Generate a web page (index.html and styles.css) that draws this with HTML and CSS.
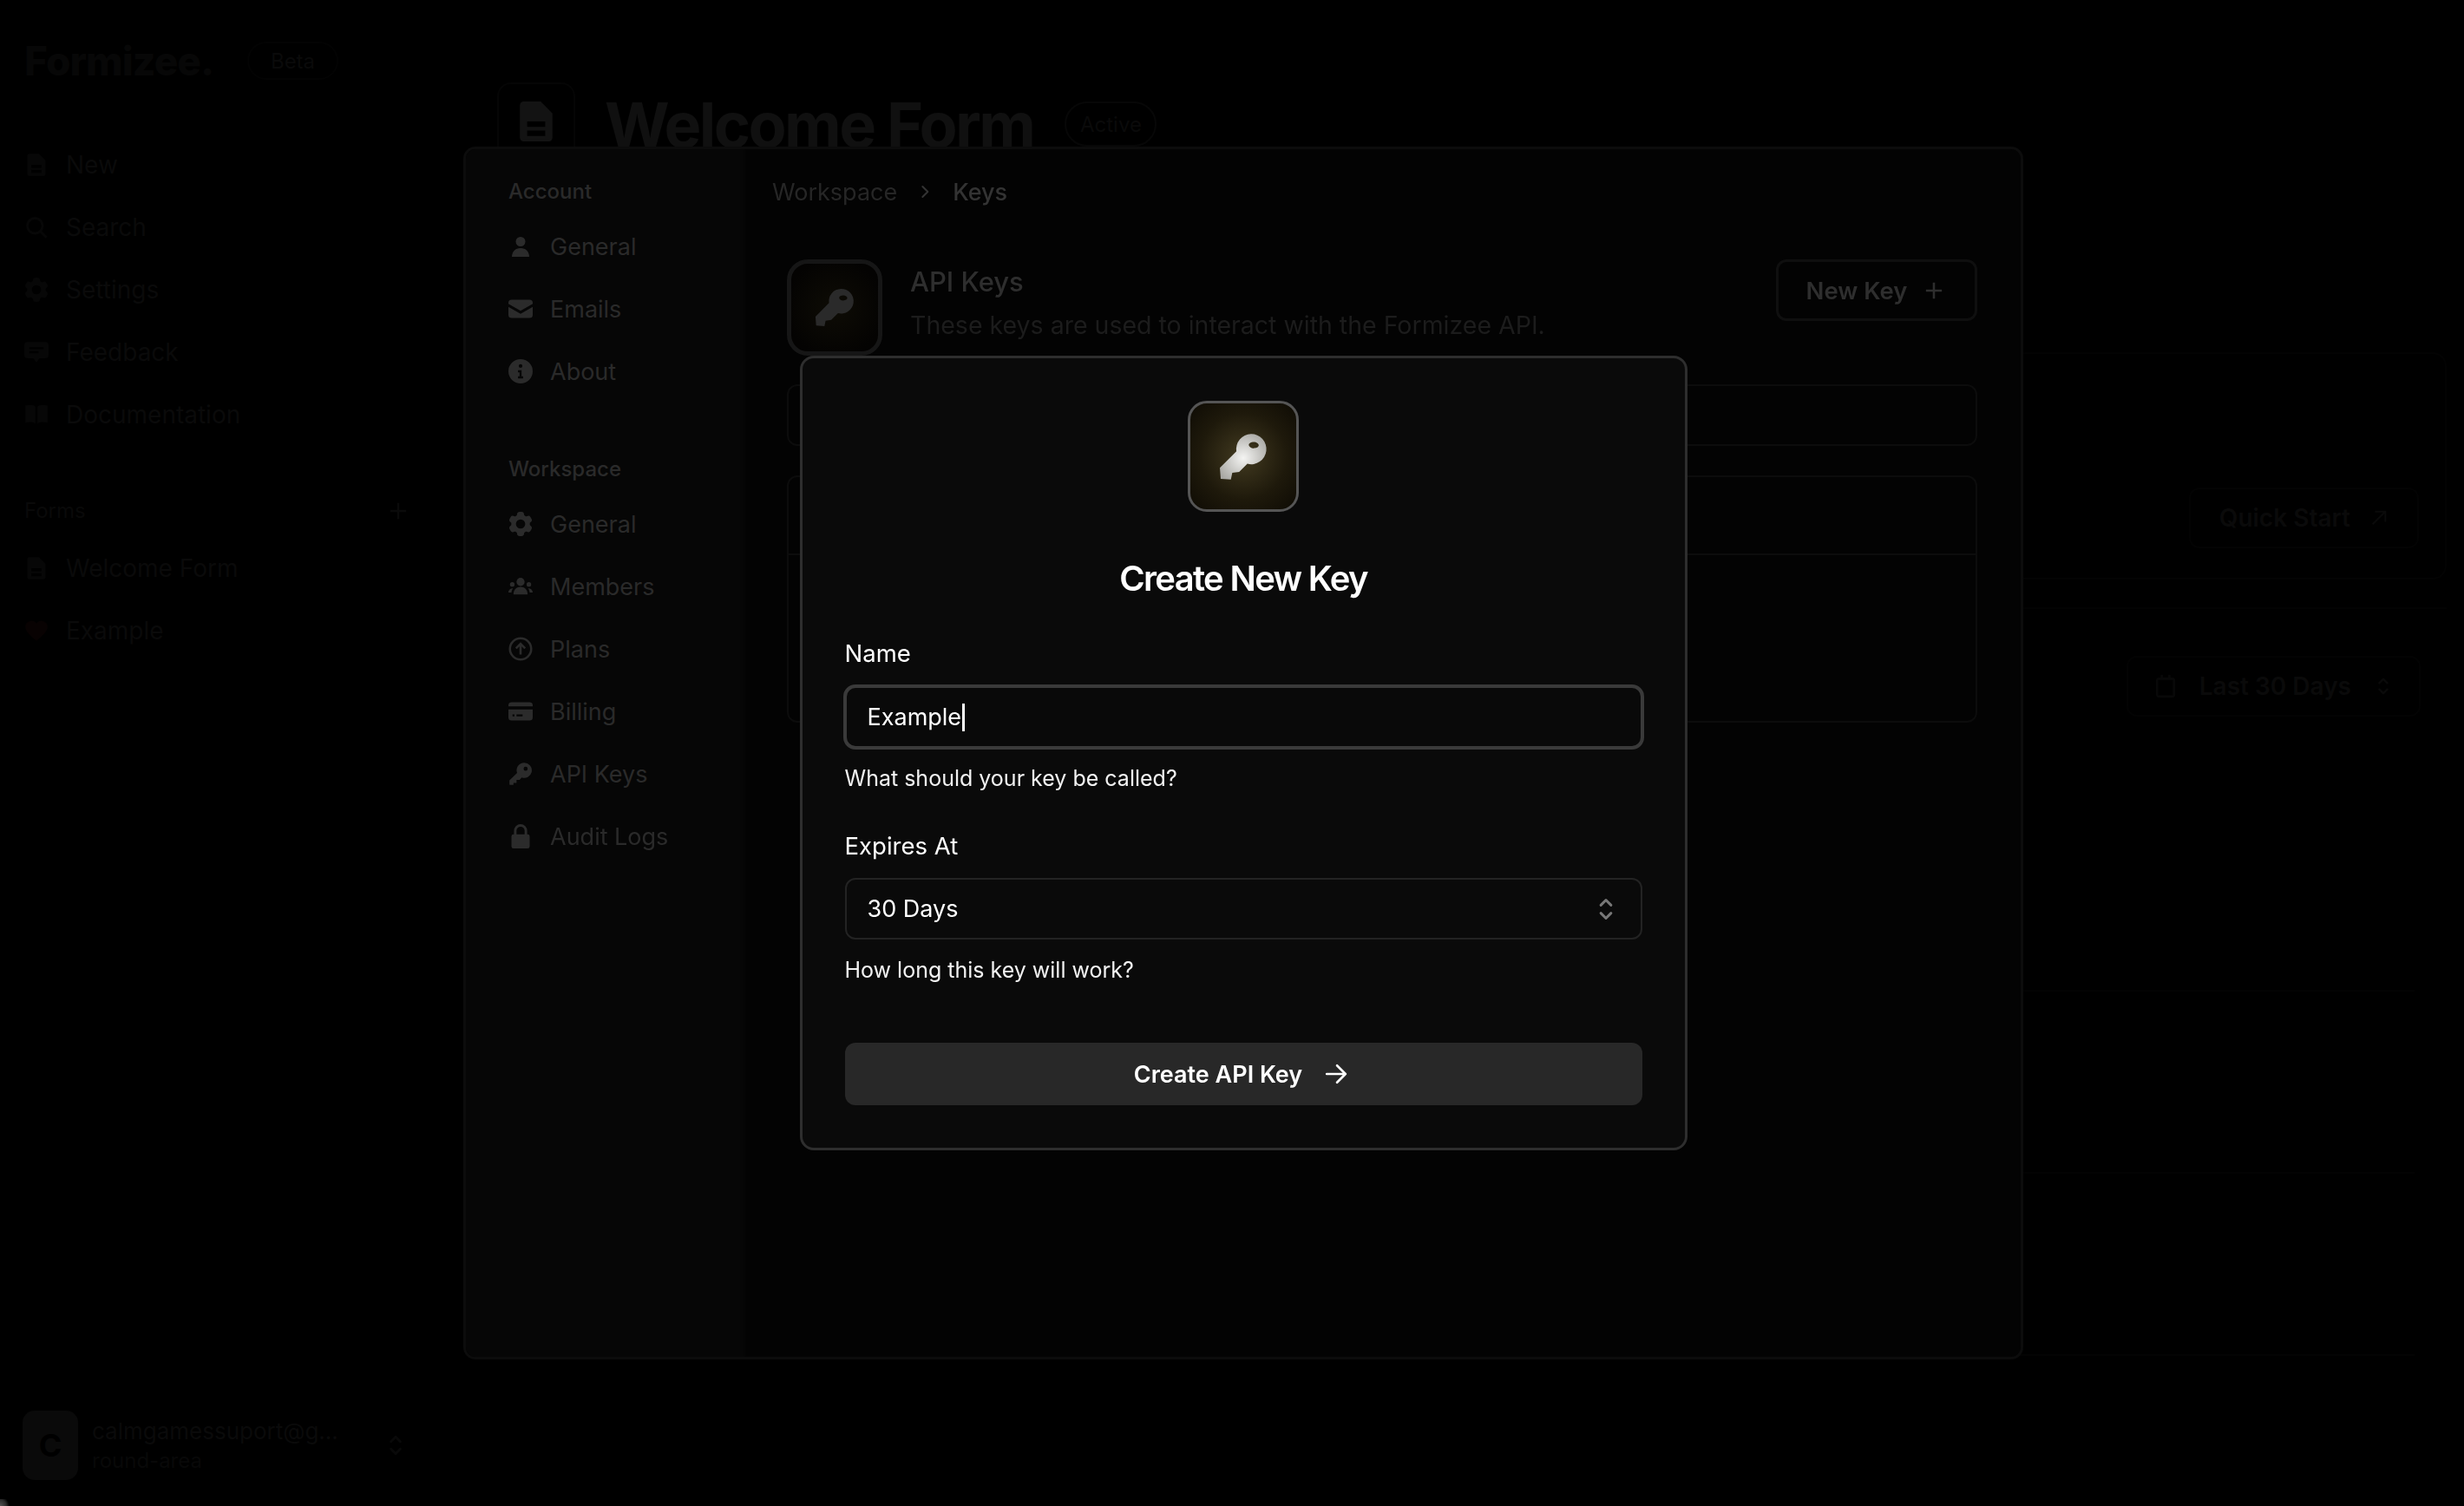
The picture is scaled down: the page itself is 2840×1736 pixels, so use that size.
FILE: index.html
```html
<!DOCTYPE html>
<html lang="en">
<head>
    <meta charset="UTF-8">
    <title>Formizee - API Keys</title>
    <link rel="stylesheet" href="styles.css">
</head>
<body>
    <svg class="sprites" width="0" height="0">
        <symbol id="i-doc" viewBox="0 0 24 24"><path fill-rule="evenodd" d="M5 1h9.500L21 7.500V21a2 2 0 0 1-2 2H5a2 2 0 0 1-2-2V3a2 2 0 0 1 2-2zM7 12v3h10v-3zM7 17v3h10v-3z"/></symbol>
        <symbol id="i-search" viewBox="0 0 24 24"><path fill="none" stroke="currentColor" stroke-width="2.4" d="M10.500 3a7.500 7.500 0 1 0 0 15 7.500 7.500 0 0 0 0-15zM16 16l6 6"/></symbol>
        <symbol id="i-gear" viewBox="2.200 2.200 19.600 19.600"><path fill-rule="evenodd" d="M11.078 2.25c-.917 0-1.699.663-1.85 1.567L9.05 4.889c-.02.12-.115.26-.297.348a7.493 7.493 0 0 0-.986.57c-.166.115-.334.126-.45.083L6.3 5.508a1.875 1.875 0 0 0-2.282.819l-.922 1.597a1.875 1.875 0 0 0 .432 2.385l.84.692c.095.078.17.229.154.43a7.598 7.598 0 0 0 0 1.139c.015.2-.059.352-.153.43l-.841.692a1.875 1.875 0 0 0-.432 2.385l.922 1.597a1.875 1.875 0 0 0 2.282.818l1.019-.382c.115-.043.283-.031.45.082.312.214.641.405.985.57.182.088.277.228.297.35l.178 1.071c.151.904.933 1.567 1.85 1.567h1.844c.916 0 1.699-.663 1.85-1.567l.178-1.072c.02-.12.114-.26.297-.349.344-.165.673-.356.985-.57.167-.114.335-.125.45-.082l1.02.382a1.875 1.875 0 0 0 2.28-.819l.923-1.597a1.875 1.875 0 0 0-.432-2.385l-.84-.692c-.095-.078-.17-.229-.154-.43a7.614 7.614 0 0 0 0-1.139c-.016-.2.059-.352.153-.43l.84-.692c.708-.582.891-1.59.433-2.385l-.922-1.597a1.875 1.875 0 0 0-2.282-.818l-1.02.382c-.114.043-.282.031-.449-.083a7.49 7.49 0 0 0-.985-.57c-.183-.087-.277-.227-.297-.348l-.179-1.072a1.875 1.875 0 0 0-1.85-1.567h-1.843zM12 15.75a3.75 3.75 0 1 0 0-7.5 3.75 3.75 0 0 0 0 7.5z"/></symbol>
        <symbol id="i-chat" viewBox="0 0 24 24"><path fill-rule="evenodd" d="M3 2h18a3 3 0 0 1 3 3v10a3 3 0 0 1-3 3h-6l-3 4-3-4H3a3 3 0 0 1-3-3V5a3 3 0 0 1 3-3zM5 7v2h14V7zM5 11v2h9v-2z"/></symbol>
        <symbol id="i-book" viewBox="0 0 24 24"><path d="M1 3c4-1 8-1 10 1v17c-2-2-6-2-10-1zM23 3c-4-1-8-1-10 1v17c2-2 6-2 10-1z"/></symbol>
        <symbol id="i-heart" viewBox="0 0 24 24"><path d="M12 22C6 17 1 13 1 8a6 6 0 0 1 11-3 6 6 0 0 1 11 3c0 5-5 9-11 14z"/></symbol>
        <symbol id="i-user" viewBox="-2 -2 28 28"><circle cx="12" cy="6.500" r="5.500"/><path d="M2 24c0-6 4-10 10-10s10 4 10 10z"/></symbol>
        <symbol id="i-mail" viewBox="0 0 24 24"><path d="M3 3h18a3 3 0 0 1 3 3v1l-12 7L0 7V6a3 3 0 0 1 3-3zM0 10l12 7 12-7v8a3 3 0 0 1-3 3H3a3 3 0 0 1-3-3z"/></symbol>
        <symbol id="i-info" viewBox="0 0 24 24"><path fill-rule="evenodd" d="M12 0a12 12 0 1 1 0 24 12 12 0 0 1 0-24zM12 5a1.800 1.800 0 1 0 0 3.600A1.800 1.800 0 0 0 12 5zM9.500 11v2H11v4H9.500v2h5v-2H13v-6z"/></symbol>
        <symbol id="i-team" viewBox="0 0 24 24"><circle cx="12" cy="7.500" r="4"/><circle cx="3.800" cy="10" r="2.300"/><circle cx="20.200" cy="10" r="2.300"/><path d="M5 20c0-5 3-7.500 7-7.500s7 2.500 7 7.500zM0 18c0-2 1.500-4 4.500-4-.8 1-1.300 2.500-1.500 4zM24 18c0-2-1.500-4-4.500-4 .8 1 1.300 2.500 1.500 4z"/></symbol>
        <symbol id="i-up" viewBox="0 0 24 24"><path fill="none" stroke="currentColor" stroke-width="2.200" d="M12 1.500a10.500 10.500 0 1 1 0 21 10.500 10.500 0 0 1 0-21zM12 17.500V7M7.500 11.500 12 7l4.500 4.500"/></symbol>
        <symbol id="i-card" viewBox="0 0 24 24"><path fill-rule="evenodd" d="M3 3h18a3 3 0 0 1 3 3v1H0V6a3 3 0 0 1 3-3zM0 10h24v8a3 3 0 0 1-3 3H3a3 3 0 0 1-3-3zM4 15v2h2v-2zM8 15v2h6v-2z"/></symbol>
        <symbol id="i-minikey" viewBox="0 0 24 24"><path fill-rule="evenodd" d="M15.500 1a7.500 7.500 0 1 1-2.300 14.600L11 18H8v3H5v2H2a1 1 0 0 1-1-1v-3.500l7.600-7.300A7.500 7.500 0 0 1 15.500 1zM17 5a2 2 0 1 0 0 4 2 2 0 0 0 0-4z"/></symbol>
        <symbol id="i-lock" viewBox="0 0 24 24"><path fill-rule="evenodd" d="M12 0a6.500 6.500 0 0 1 6.500 6.500V10h.5a2 2 0 0 1 2 2v10a2 2 0 0 1-2 2H5a2 2 0 0 1-2-2V12a2 2 0 0 1 2-2h.5V6.500A6.500 6.500 0 0 1 12 0zM12 2.500a4 4 0 0 0-4 4V10h8V6.500a4 4 0 0 0-4-4z"/></symbol>
        <symbol id="i-plus" viewBox="0 0 24 24"><path fill="none" stroke="currentColor" stroke-width="2.800" d="M12 2v20M2 12h20"/></symbol>
        <symbol id="i-updown" viewBox="0 0 24 24"><path fill="none" stroke="currentColor" stroke-width="2.600" stroke-linecap="round" stroke-linejoin="round" d="M7 8l5-5 5 5M7 16l5 5 5-5"/></symbol>
        <symbol id="i-arrow" viewBox="0 0 24 24"><path fill="none" stroke="currentColor" stroke-width="2.400" stroke-linecap="round" stroke-linejoin="round" d="M2 12h20M13 3l9 9-9 9"/></symbol>
        <symbol id="i-outlink" viewBox="0 0 24 24"><path fill="none" stroke="currentColor" stroke-width="2.200" d="M4 20 20 4M7 4h13v13"/></symbol>
        <symbol id="i-cal" viewBox="0 0 24 24"><path fill="none" stroke="currentColor" stroke-width="2.400" d="M5 4h14a2 2 0 0 1 2 2v15a2 2 0 0 1-2 2H5a2 2 0 0 1-2-2V6a2 2 0 0 1 2-2zM8 0v5M16 0v5"/></symbol>
        <symbol id="i-chev" viewBox="0 0 24 24"><path fill="none" stroke="currentColor" stroke-width="3" stroke-linecap="round" stroke-linejoin="round" d="M8 3l9 9-9 9"/></symbol>
        <symbol id="i-bigkey" viewBox="0 0 128 128"><path fill-rule="evenodd" d="M73.300 37a18.300 18.300 0 1 1-4.300 36L59 83l-8.300 1L49 92l-12.300-.7-1-13.300 20-20A18.300 18.300 0 0 1 73.300 37zM76.700 46.700c-3.300 0-6 1.400-6 3.400s2.700 4.200 6 4.200 6-1.600 6-3.600-2.700-4-6-4z"/></symbol>
    </svg>

    <div class="app">
        <aside class="sidebar">
            <div class="brand">
                <span class="logo">Formizee.</span>
                <span class="beta">Beta</span>
            </div>
            <nav class="side-nav">
                <a class="side-link"><svg class="side-icon"><use href="#i-doc"/></svg>New</a>
                <a class="side-link"><svg class="side-icon"><use href="#i-search"/></svg>Search</a>
                <a class="side-link"><svg class="side-icon"><use href="#i-gear"/></svg>Settings</a>
                <a class="side-link"><svg class="side-icon"><use href="#i-chat"/></svg>Feedback</a>
                <a class="side-link"><svg class="side-icon"><use href="#i-book"/></svg>Documentation</a>
            </nav>
            <div class="forms-head">
                <span>Forms</span>
                <svg class="forms-plus"><use href="#i-plus"/></svg>
            </div>
            <nav class="forms-list">
                <a class="side-link"><svg class="side-icon"><use href="#i-doc"/></svg>Welcome Form</a>
                <a class="side-link"><svg class="side-icon heart"><use href="#i-heart"/></svg>Example</a>
            </nav>
            <div class="account">
                <div class="avatar">C</div>
                <div class="account-text">
                    <div class="account-mail">calmgamessuport@g...</div>
                    <div class="account-team">round-area</div>
                </div>
                <svg class="account-toggle"><use href="#i-updown"/></svg>
            </div>
        </aside>

        <main class="main">
            <div class="page-head">
                <div class="page-icon"><svg><use href="#i-doc"/></svg></div>
                <h1>Welcome Form</h1>
                <span class="status">Active</span>
            </div>
            <section class="share-card">
                <button class="ghost-btn">Quick Start <svg><use href="#i-outlink"/></svg></button>
            </section>
            <section class="stats-card">
                <button class="ghost-btn range-btn">
                    <svg class="cal"><use href="#i-cal"/></svg> Last 30 Days <svg><use href="#i-updown"/></svg>
                </button>
                <div class="chart-lines">
                    <div class="chart-line"></div>
                    <div class="chart-line"></div>
                    <div class="chart-line"></div>
                </div>
            </section>
        </main>
    </div>

    <!-- settings dialog behind the key dialog -->
    <div class="overlay">
        <div class="settings">
            <aside class="settings-nav">
                <h4>Account</h4>
                <a class="settings-link"><svg><use href="#i-user"/></svg>General</a>
                <a class="settings-link"><svg><use href="#i-mail"/></svg>Emails</a>
                <a class="settings-link"><svg><use href="#i-info"/></svg>About</a>
                <h4 class="workspace-title">Workspace</h4>
                <a class="settings-link"><svg><use href="#i-gear"/></svg>General</a>
                <a class="settings-link"><svg><use href="#i-team"/></svg>Members</a>
                <a class="settings-link"><svg><use href="#i-up"/></svg>Plans</a>
                <a class="settings-link"><svg><use href="#i-card"/></svg>Billing</a>
                <a class="settings-link"><svg><use href="#i-minikey"/></svg>API Keys</a>
                <a class="settings-link"><svg><use href="#i-lock"/></svg>Audit Logs</a>
            </aside>
            <div class="settings-body">
                <div class="crumbs">
                    <span>Workspace</span>
                    <svg><use href="#i-chev"/></svg>
                    <span class="crumb-current">Keys</span>
                </div>
                <div class="keys-head">
                    <div class="keys-icon"><svg><use href="#i-bigkey"/></svg></div>
                    <div class="keys-text">
                        <h3>API Keys</h3>
                        <p>These keys are used to interact with the Formizee API.</p>
                    </div>
                    <button class="new-key">New Key <svg><use href="#i-plus"/></svg></button>
                </div>
                <div class="keys-search"></div>
                <div class="keys-table"><div class="keys-table-head"></div></div>
            </div>
        </div>
    </div>

    <div class="overlay">
        <div class="modal">
            <div class="modal-icon">
                <svg viewBox="0 0 128 128">
                    <defs>
                        <radialGradient id="key-metal" gradientUnits="userSpaceOnUse" cx="64" cy="66" r="34">
                            <stop offset="0" stop-color="#f4f4f2"/>
                            <stop offset="1" stop-color="#a8a7a3"/>
                        </radialGradient>
                    </defs>
                    <use href="#i-bigkey" width="128" height="128" fill="url(#key-metal)"/>
                </svg>
            </div>
            <h2>Create New Key</h2>
            <label class="field-label">Name</label>
            <div class="input">Example<span class="caret"></span></div>
            <p class="field-help">What should your key be called?</p>
            <label class="field-label expires-label">Expires At</label>
            <div class="select">
                <span>30 Days</span>
                <svg><use href="#i-updown"/></svg>
            </div>
            <p class="field-help select-help">How long this key will work?</p>
            <button class="submit">Create API Key <svg><use href="#i-arrow"/></svg></button>
        </div>
    </div>

    <div class="window-corner"></div>
</body>
</html>
```

FILE: styles.css
```css
/* Global Styles */
* {
    box-sizing: border-box;
}

html, body {
    height: 100%;
}

body {
    margin: 0;
    background-color: #000000;
    font-family: 'Inter', 'Liberation Sans', sans-serif;
    color: #FFFFFF;
    overflow: hidden;
}

.sprites {
    display: block;
    height: 0;
}

svg {
    fill: currentColor;
    flex-shrink: 0;
}

h1, h2, h3, h4, p {
    margin: 0;
}

button {
    font-family: inherit;
    border: none;
    background: none;
    padding: 0;
}

/* Dimmed app behind the dialogs */
.app {
    display: flex;
    height: 1736px;
    color: #0b0b0b;
}

.sidebar {
    display: flex;
    flex-direction: column;
    width: 534px;
    padding: 46px 26px 30px 28px;
}

.brand {
    display: flex;
    align-items: center;
    gap: 44px;
    height: 48px;
}

.logo {
    font-size: 46px;
    font-weight: 800;
    letter-spacing: -0.02em;
    color: #070707;
    width: 213px;
    white-space: nowrap;
}

.beta {
    display: flex;
    align-items: center;
    justify-content: center;
    width: 105px;
    height: 44px;
    border: 2px solid #030303;
    border-radius: 22px;
    font-size: 24px;
    color: #0a0a0a;
}

.side-nav {
    display: flex;
    flex-direction: column;
    margin-top: 60px;
}

.side-link {
    display: flex;
    align-items: center;
    gap: 20px;
    height: 72px;
    font-size: 28px;
    color: #0a0a0a;
}

.side-icon {
    width: 28px;
    height: 28px;
    color: #070707;
}

.side-icon.heart {
    color: #080202;
}

.forms-head {
    display: flex;
    justify-content: space-between;
    align-items: center;
    margin-top: 60px;
    padding-right: 38px;
    font-size: 24px;
    color: #090909;
}

.forms-plus {
    width: 22px;
    height: 22px;
    color: #0a0a0a;
}

.forms-list {
    display: flex;
    flex-direction: column;
    margin-top: 16px;
}

.account {
    display: flex;
    align-items: center;
    margin-top: auto;
    margin-left: -2px;
    margin-right: 39px;
}

.avatar {
    display: flex;
    align-items: center;
    justify-content: center;
    width: 64px;
    height: 80px;
    border-radius: 14px;
    background-color: #0a0a0a;
    font-size: 36px;
    font-weight: 700;
    color: #000000;
}

.account-text {
    margin-left: 16px;
    flex: 1;
}

.account-mail {
    font-size: 26px;
    color: #0a0a0a;
    white-space: nowrap;
}

.account-team {
    margin-top: 4px;
    font-size: 24px;
    color: #080808;
}

.account-toggle {
    width: 26px;
    height: 26px;
    color: #090909;
}

.main {
    flex: 1;
    padding: 95px 20px 0 39px;
}

.page-head {
    display: flex;
    align-items: center;
    height: 90px;
}

.page-icon {
    display: flex;
    align-items: center;
    justify-content: center;
    width: 90px;
    height: 90px;
    border: 2px solid #050505;
    border-radius: 16px;
    color: #131313;
}

.page-icon svg {
    width: 50px;
    height: 50px;
}

.page-head h1 {
    margin: 6px 0 0 34px;
    font-size: 72px;
    font-weight: 700;
    letter-spacing: -0.036em;
    color: #101010;
    white-space: nowrap;
}

.status {
    display: flex;
    align-items: center;
    justify-content: center;
    width: 106px;
    height: 52px;
    margin: 6px 0 0 36px;
    border: 2px solid #070707;
    border-radius: 26px;
    font-size: 24px;
    color: #0a0a0a;
}

.share-card {
    display: flex;
    justify-content: flex-end;
    height: 262px;
    margin-top: 221px;
    padding: 154px 30px 0 0;
    border: 2px solid #030303;
    border-radius: 16px;
}

.stats-card {
    display: flex;
    flex-direction: column;
    align-items: flex-end;
    margin-top: 32px;
    padding: 54px 30px 0 0;
    border-top: 2px solid #030303;
}

.chart-lines {
    display: flex;
    flex-direction: column;
    gap: 208px;
    width: 100%;
    margin-top: 315px;
    padding-right: 7px;
}

.chart-line {
    height: 2px;
    background-color: #030303;
}

.ghost-btn {
    display: flex;
    align-items: center;
    justify-content: center;
    gap: 22px;
    height: 70px;
    padding: 0 33px;
    border: 2px solid #030303;
    border-radius: 12px;
    font-size: 28px;
    font-weight: 600;
    color: #0a0a0a;
}

.ghost-btn svg {
    width: 22px;
    height: 22px;
}

.ghost-btn.range-btn {
    gap: 26px;
    padding: 0 30px;
}

.ghost-btn .cal {
    width: 26px;
    height: 30px;
    color: #080808;
}

/* Dialog layers */
.overlay {
    position: fixed;
    inset: 0;
    display: flex;
    align-items: center;
    justify-content: center;
    padding-left: 26px;
}

.settings {
    display: flex;
    width: 1798px;
    height: 1398px;
    border: 3px solid #0c0c0c;
    border-radius: 14px;
    background-color: #030303;
    overflow: hidden;
}

.settings-nav {
    display: flex;
    flex-direction: column;
    width: 322px;
    padding: 31px 0 0 49px;
    border-right: 2px solid #050505;
    background-color: #060606;
}

.settings-nav h4 {
    font-size: 24px;
    font-weight: 500;
    line-height: 36px;
    color: #2a2a2a;
}

.settings-nav .workspace-title {
    margin-top: 59px;
}

.settings-link {
    display: flex;
    align-items: center;
    gap: 20px;
    height: 72px;
    font-size: 27px;
    color: #2a2a2a;
}

.settings-nav h4 + .settings-link {
    margin-top: 9px;
}

.settings-link svg {
    width: 28px;
    height: 28px;
    color: #2b2b2b;
}

.settings-body {
    flex: 1;
    padding: 29px 50px 0 31px;
}

.crumbs {
    display: flex;
    align-items: center;
    gap: 24px;
    height: 40px;
    font-size: 27px;
    color: #262626;
}

.crumbs svg {
    width: 16px;
    height: 16px;
    color: #333333;
}

.crumb-current {
    font-weight: 500;
    color: #333333;
}

.keys-head {
    display: flex;
    align-items: flex-start;
    margin: 58px 0 0 17px;
}

.keys-icon {
    width: 110px;
    height: 111px;
    border: 5px solid #161616;
    border-radius: 24px;
    background: radial-gradient(circle, #0e0c05 0%, #040302 80%);
    color: #2a2a2a;
}

.keys-icon svg {
    width: 100px;
    height: 100px;
}

.keys-text {
    flex: 1;
    margin-left: 32px;
}

.keys-text h3 {
    font-size: 31px;
    font-weight: 500;
    line-height: 44px;
    margin-top: 4px;
    color: #2e2e2e;
}

.keys-text p {
    margin-top: 10px;
    font-size: 28.500px;
    color: #1c1c1c;
    white-space: nowrap;
}

.new-key {
    display: flex;
    align-items: center;
    justify-content: center;
    gap: 20px;
    width: 232px;
    height: 71px;
    padding-right: 4px;
    padding-top: 1px;
    border: 3px solid #0f0f0f;
    border-radius: 12px;
    font-size: 27.500px;
    font-weight: 600;
    color: #2e2e2e;
}

.new-key svg {
    width: 22px;
    height: 22px;
}

.keys-search {
    height: 71px;
    margin: 33px 0 0 17px;
    border: 2px solid #0c0c0c;
    border-radius: 12px;
}

.keys-table {
    height: 285px;
    margin: 34px 0 0 17px;
    border: 2px solid #0c0c0c;
    border-radius: 12px;
}

.keys-table-head {
    height: 90px;
    border-bottom: 2px solid #0c0c0c;
}

/* Create key dialog */
.modal {
    display: flex;
    flex-direction: column;
    width: 1023px;
    height: 916px;
    padding: 49px 49px;
    border: 3px solid #2e2e2e;
    border-radius: 16px;
    background-color: #0a0a0a;
}

.modal-icon {
    display: flex;
    align-self: center;
    width: 128px;
    height: 128px;
    border: 3px solid #555555;
    border-radius: 22px;
    background: radial-gradient(circle, #423a20 0%, #1e190b 58%, #0e0b04 100%);
}

.modal-icon svg {
    width: 122px;
    height: 122px;
}

.modal h2 {
    margin-top: 53px;
    font-size: 40px;
    font-weight: 600;
    line-height: 48px;
    letter-spacing: -0.042em;
    text-align: center;
}

.field-label {
    margin-top: 44px;
    font-size: 27.500px;
    line-height: 36px;
}

.expires-label {
    margin-top: 43px;
}

.input {
    display: flex;
    align-items: center;
    height: 75px;
    margin: 18px -2px 0;
    padding: 0 24px;
    border: 4px solid #3a3a3a;
    border-radius: 14px;
    background-color: #090909;
    font-size: 27px;
}

.caret {
    width: 3px;
    height: 32px;
    margin-left: 1px;
    background-color: #FFFFFF;
}

.field-help {
    margin-top: 16px;
    font-size: 25px;
    line-height: 34px;
    color: #F2F2F2;
}

.field-help.select-help {
    margin-top: 18px;
}

.select {
    display: flex;
    align-items: center;
    justify-content: space-between;
    height: 71px;
    margin-top: 19px;
    padding: 0 26px 0 24px;
    border: 2px solid #232323;
    border-radius: 12px;
    font-size: 27px;
}

.select svg {
    width: 28px;
    height: 28px;
    color: #777777;
}

.submit {
    display: flex;
    align-items: center;
    justify-content: center;
    gap: 26px;
    height: 72px;
    margin-top: auto;
    padding-right: 6px;
    border-radius: 12px;
    background-color: #282828;
    font-size: 27px;
    font-weight: 600;
    color: #FFFFFF;
}

.submit svg {
    width: 26px;
    height: 26px;
}

/* rounded window edge caught by the screenshot */
.window-corner {
    position: fixed;
    left: 0;
    bottom: 0;
    width: 12px;
    height: 8px;
    background: radial-gradient(circle at 0 100%, #555555 0, #2a2a2a 50%, transparent 75%);
}
```
